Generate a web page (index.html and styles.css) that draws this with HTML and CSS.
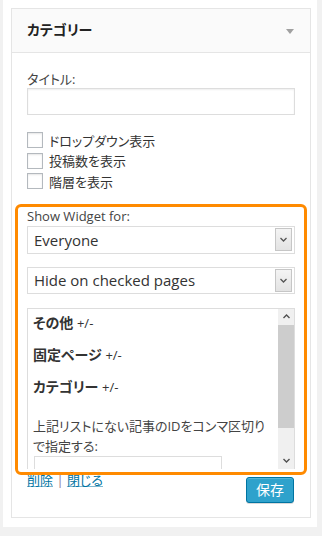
FILE: index.html
```html
<!DOCTYPE html>
<html lang="ja">
<head>
    <meta charset="UTF-8">
    <meta name="viewport" content="width=device-width, initial-scale=1.0">
    <title>ウィジェット</title>
    <link rel="stylesheet" href="styles.css">
</head>
<body>
    <div class="sidebar">
        <div class="widget">
            <div class="widget-top">
                <h3>カテゴリー</h3>
                <span class="widget-toggle"></span>
            </div>

            <div class="widget-inside">
                <label class="field-label">タイトル:</label>
                <input class="text-input" type="text">

                <ul class="options">
                    <li><span class="checkbox"></span>ドロップダウン表示</li>
                    <li><span class="checkbox"></span>投稿数を表示</li>
                    <li><span class="checkbox"></span>階層を表示</li>
                </ul>

                <div class="highlight">
                    <div class="field-label latin">Show Widget for:</div>
                    <div class="select">
                        <span>Everyone</span>
                        <span class="select-arrow">
                            <svg width="7" height="5" viewBox="0 0 7 5"><polyline points="0.5,1 3.5,4 6.5,1" fill="none" stroke="#555" stroke-width="1.3"/></svg>
                        </span>
                    </div>
                    <div class="select second">
                        <span>Hide on checked pages</span>
                        <span class="select-arrow">
                            <svg width="7" height="5" viewBox="0 0 7 5"><polyline points="0.5,1 3.5,4 6.5,1" fill="none" stroke="#555" stroke-width="1.3"/></svg>
                        </span>
                    </div>

                    <div class="page-list">
                        <div class="page-list-content">
                            <div class="group">その他 <span class="toggle-all">+/-</span></div>
                            <div class="group">固定ページ <span class="toggle-all">+/-</span></div>
                            <div class="group">カテゴリー <span class="toggle-all">+/-</span></div>
                            <p class="note">上記リストにない記事のIDをコンマ区切り<br>で指定する:</p>
                            <input class="id-input" type="text">
                        </div>
                        <div class="scrollbar">
                            <span class="sb-btn">
                                <svg width="7" height="5" viewBox="0 0 7 5"><polyline points="0.5,4 3.5,1 6.5,4" fill="none" stroke="#505050" stroke-width="1.4"/></svg>
                            </span>
                            <span class="sb-thumb"></span>
                            <span class="sb-track"></span>
                            <span class="sb-btn">
                                <svg width="7" height="5" viewBox="0 0 7 5"><polyline points="0.5,1 3.5,4 6.5,1" fill="none" stroke="#505050" stroke-width="1.4"/></svg>
                            </span>
                        </div>
                    </div>
                </div>

                <div class="widget-control">
                    <div class="control-links"><a href="#">削除</a> <span class="sep">|</span> <a href="#">閉じる</a></div>
                    <button class="save">保存</button>
                </div>
            </div>
        </div>
    </div>
</body>
</html>
```

FILE: styles.css
```css
* {
    margin: 0;
    padding: 0;
    box-sizing: border-box;
}

body {
    font-family: "Open Sans", "Noto Sans CJK JP", sans-serif;
    font-size: 13px;
    font-feature-settings: "palt";
    color: #444;
    background-color: #f1f1f1;
    padding: 0 5px 0 3px;
}

.sidebar {
    background-color: #fff;
    height: 527px;
    padding: 8px 6px 0 8px;
}

.widget {
    border: 1px solid #e5e5e5;
    background-color: #fff;
}

.widget-top {
    height: 44px;
    background-color: #fafafa;
    border-bottom: 1px solid #e5e5e5;
    display: flex;
    align-items: center;
    justify-content: space-between;
    padding: 0 16px 1px 15px;
}

.widget-top h3 {
    font-size: 14px;
    font-weight: bold;
    color: #222;
    line-height: 20px;
}

.widget-toggle {
    width: 0;
    height: 0;
    border-left: 4px solid transparent;
    border-right: 4px solid transparent;
    border-top: 5px solid #a0a0a0;
    margin-top: 2px;
}

.widget-inside {
    padding: 17px 15px 14px 15px;
}

.field-label {
    display: block;
    line-height: 18px;
    color: #444;
}

.text-input {
    display: block;
    width: 100%;
    height: 27px;
    border: 1px solid #ddd;
    box-shadow: inset 0 1px 2px rgba(0,0,0,0.07);
    background-color: #fff;
}

.options {
    list-style: none;
    margin-top: 15px;
}

.options li {
    display: flex;
    align-items: center;
    height: 20.5px;
    color: #333;
}

.checkbox {
    width: 16px;
    height: 16px;
    border: 1px solid #b4b9be;
    background-color: #fff;
    box-shadow: inset 0 1px 2px rgba(0,0,0,0.1);
    margin-right: 6px;
}

.highlight {
    position: relative;
    z-index: 1;
    height: 271px;
    margin: 12px -12px 0;
    padding: 0 9px;
    border: 3px solid #ff8a00;
    border-radius: 6px;
    overflow: hidden;
}

.select {
    display: flex;
    align-items: center;
    justify-content: space-between;
    height: 28px;
    margin-top: 1px;
    border: 1px solid #ddd;
    background-color: #fff;
    padding: 0 2px 0 6px;
    font-size: 15px;
    color: #333;
}

.select.second {
    height: 27px;
    margin-top: 13px;
}

.select-arrow {
    width: 17px;
    height: 23px;
    border: 1px solid #c6c6c6;
    background: linear-gradient(#f4f4f4, #e3e3e3);
    display: flex;
    align-items: center;
    justify-content: center;
}

.page-list {
    display: flex;
    height: 161px;
    margin-top: 14px;
    border: 1px solid #ddd;
    border-bottom: 0;
}

.page-list-content {
    flex: 1;
    padding: 4px 0 0 5px;
    overflow: hidden;
}

.group {
    font-size: 14px;
    font-weight: bold;
    line-height: 20px;
    margin-bottom: 12px;
    color: #333;
}

.toggle-all {
    font-size: 13px;
    font-weight: normal;
    color: #333;
}

.note {
    line-height: 20px;
    margin-top: 19px;
    color: #444;
    white-space: nowrap;
}

.id-input {
    display: block;
    width: 188px;
    height: 28px;
    margin-left: 1px;
    border: 1px solid #ddd;
    background-color: #fff;
}

.scrollbar {
    width: 16px;
    display: flex;
    flex-direction: column;
    background-color: #f0f0f0;
}

.sb-btn {
    height: 16px;
    display: flex;
    align-items: center;
    justify-content: center;
}

.sb-thumb {
    height: 103px;
    background-color: #cdcdcd;
}

.sb-track {
    flex: 1;
}

.widget-control {
    display: flex;
    justify-content: space-between;
    align-items: flex-start;
    margin-top: 2px;
}

.control-links {
    line-height: 18px;
    margin-top: -6px;
    color: #666;
}

.control-links a {
    color: #0074a2;
    text-decoration: underline;
    text-decoration-color: #7fb8d0;
}

.sep {
    color: #8a7a9a;
}

.save {
    width: 48px;
    height: 26px;
    margin-right: 1px;
    background-color: #2ea2cc;
    border: 1px solid #0074a2;
    border-radius: 3px;
    box-shadow: inset 0 1px 0 rgba(120,200,230,0.5), 0 1px 0 rgba(0,0,0,0.15);
    color: #fff;
    font-family: "Open Sans", "Noto Sans CJK JP", sans-serif;
    font-size: 14px;
    line-height: 22px;
}
```
